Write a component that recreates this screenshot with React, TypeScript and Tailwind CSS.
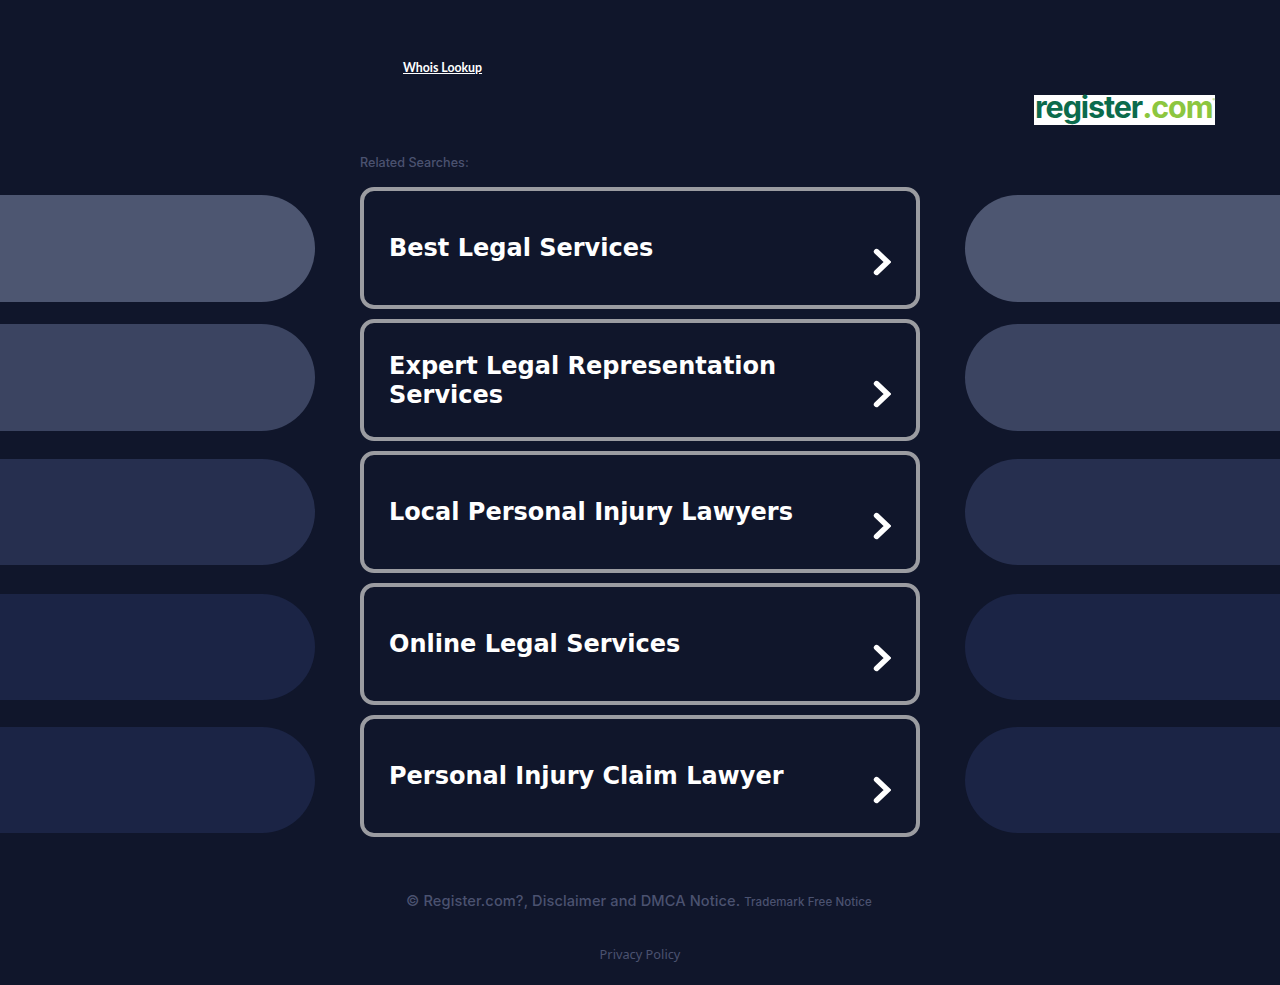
const searches = [
  'Best Legal Services',
  'Expert Legal Representation Services',
  'Local Personal Injury Lawyers',
  'Online Legal Services',
  'Personal Injury Claim Lawyer',
];

function Chevron() {
  return (
    <svg width="18" height="28" viewBox="0 0 18 28" className="mt-[27px] shrink-0" fill="none">
      <path d="M3.5 3.5 L14.5 14 L3.5 24.5" stroke="#fff" strokeWidth="5.4" strokeLinecap="round" strokeLinejoin="miter" />
    </svg>
  );
}

function LeftPills() {
  return (
    <div className="w-[315px] shrink-0 pt-2">
      <div className="h-[107px] rounded-r-[54px] bg-[#4d5671]" />
      <div className="mt-[22px] h-[107px] rounded-r-[54px] bg-[#3b4461]" />
      <div className="mt-[28px] h-[106px] rounded-r-[53px] bg-[#262f4f]" />
      <div className="mt-[29px] h-[106px] rounded-r-[53px] bg-[#1b2445]" />
      <div className="mt-[27px] h-[106px] rounded-r-[53px] bg-[#1b2445]" />
    </div>
  );
}

function RightPills() {
  return (
    <div className="w-[315px] shrink-0 pt-2">
      <div className="h-[107px] rounded-l-[54px] bg-[#4d5671]" />
      <div className="mt-[22px] h-[107px] rounded-l-[54px] bg-[#3b4461]" />
      <div className="mt-[28px] h-[106px] rounded-l-[53px] bg-[#262f4f]" />
      <div className="mt-[29px] h-[106px] rounded-l-[53px] bg-[#1b2445]" />
      <div className="mt-[27px] h-[106px] rounded-l-[53px] bg-[#1b2445]" />
    </div>
  );
}

export default function App() {
  return (
    <div className="h-[985px] overflow-hidden bg-[#10162b] font-['Noto_Sans',sans-serif]">
      <header className="h-[187px] pt-[60px]">
        <a href="#" className="ml-[403px] block w-fit text-[12.3px] leading-4 font-bold text-white underline font-['Lato',sans-serif]">
          Whois Lookup
        </a>
        <div className="mt-[19px] mr-[65px] ml-auto flex h-[30px] w-[181px] items-start bg-white pl-px text-[30.5px] leading-[24px] font-bold tracking-[-1.1px] font-['Inter',sans-serif]">
          <span className="text-[#0b6b4c]">register</span>
          <span className="text-[#8cc63f]">.com</span>
          <span className="mt-[2px] text-[4px] leading-[5px] tracking-normal text-[#8cc63f]">®</span>
        </div>
        <p className="mt-[30px] ml-[360px] text-[12.6px] leading-4 font-medium text-[#4b5270] font-['Inter',sans-serif]">
          Related Searches:
        </p>
      </header>

      <main className="flex justify-between">
        <LeftPills />
        <div className="flex w-[560px] shrink-0 flex-col gap-[10px]">
          {searches.map((label) => (
            <a
              key={label}
              href="#"
              className="flex h-[122px] items-center justify-between rounded-[14px] border-[4px] border-[#9b9ca1] pr-[25px] pl-[25px] text-[24px] leading-[29px] font-bold text-white font-['DejaVu_Sans',sans-serif]"
            >
              <span className="mt-px max-w-[440px]">{label}</span>
              <Chevron />
            </a>
          ))}
        </div>
        <RightPills />
      </main>

      <footer className="text-center">
        <p className="mt-[54px] -translate-x-px text-[14.6px] leading-5 font-medium tracking-[0.1px] text-[#4b5270] font-['Inter',sans-serif]">
          © Register.com?, Disclaimer and DMCA Notice.{' '}
          <span className="text-[11.5px] font-medium">Trademark Free Notice</span>
        </p>
        <a href="#" className="mt-[34px] block text-[12.8px] leading-4 text-[#4b5270]">
          Privacy Policy
        </a>
      </footer>
    </div>
  );
}
